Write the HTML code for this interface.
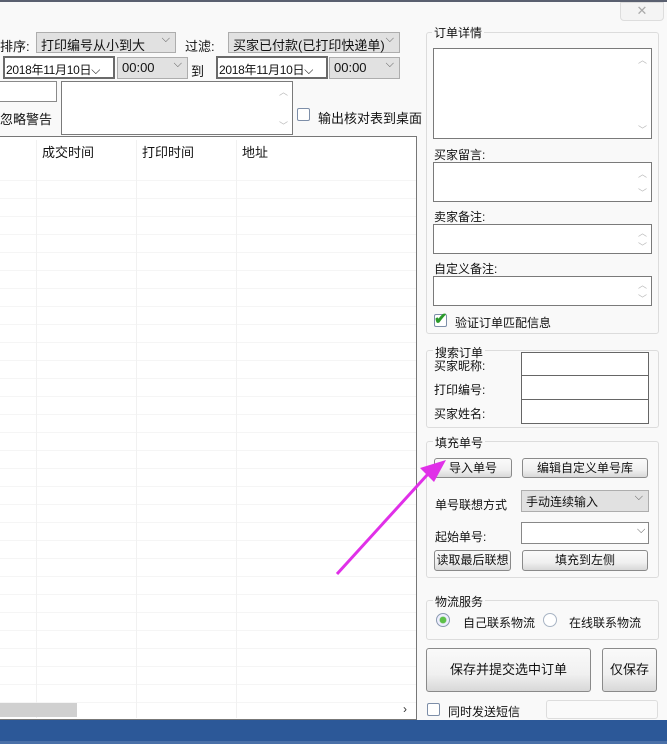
<!DOCTYPE html>
<html><head><meta charset="utf-8"><style>
*{box-sizing:border-box;margin:0;padding:0}
body{width:667px;height:744px;overflow:hidden;background:#f9f9f9;font:12px "Liberation Sans","Noto Sans CJK SC",sans-serif;color:#111;position:relative}
.a{position:absolute;white-space:nowrap}
.sel{position:absolute;background:#e1e1e1;border:1px solid #adadad;height:21px;padding:2px 0 0 4px;font-size:13px}
.sel:after{content:"⌵";position:absolute;right:5px;top:0px;font-size:11px;color:#555}
.dt{position:absolute;background:#fff;border:2px solid #6a6a6a;height:23px;padding:3px 0 0 1px;font-size:12px;letter-spacing:-0.3px;overflow:hidden}
.box{position:absolute;background:#fff;border:1px solid #7a7a7a}
.box .up,.box .dn{position:absolute;right:4px;font-size:9px;color:#bbb}
.grp{position:absolute;border:1px solid #dcdcdc;border-radius:3px}
.lg{position:absolute;background:#f9f9f9;padding:0 2px;font-size:12px}
.btn{position:absolute;border:1px solid #8a8a8a;border-radius:3px;background:linear-gradient(#fafafa,#f0f0f0 60%,#d8d8d8);text-align:center;font-size:12px}
.cb{position:absolute;width:13px;height:13px;border:1px solid #7d8ea8;background:#fff;border-radius:2px}
</style></head><body>
<div class="a" style="left:0;top:0;width:667px;height:2px;background:#5a6070"></div>
<div class="a" style="left:0;top:36px;font-size:13px">排序:</div>
<div class="sel" style="left:36px;top:32px;width:140px">打印编号从小到大</div>
<div class="a" style="left:185px;top:36px;font-size:13px">过滤:</div>
<div class="sel" style="left:228px;top:32px;width:172px">买家已付款(已打印快递单)</div>
<div class="dt" style="left:3px;top:56px;width:112px">2018年11月10日⌵</div>
<div class="sel" style="left:117px;top:57px;width:71px;height:22px">00:00</div>
<div class="a" style="left:191px;top:61px;font-size:13px">到</div>
<div class="dt" style="left:216px;top:56px;width:112px">2018年11月10日⌵</div>
<div class="sel" style="left:329px;top:57px;width:71px;height:22px">00:00</div>
<div class="a" style="left:-2px;top:81px;width:59px;height:21px;background:#fff;border:1px solid #8a8a8a"></div>
<div class="a" style="left:0;top:109px;font-size:13px">忽略警告</div>
<div class="box" style="left:61px;top:81px;width:232px;height:54px"><span class="up" style="top:3px">︿</span><span class="dn" style="bottom:2px">﹀</span></div>
<div class="cb" style="left:297px;top:108px"></div>
<div class="a" style="left:318px;top:108px;font-size:13px">输出核对表到桌面</div>
<div class="a" style="left:0;top:136px;width:417px;height:584px;background:#fff;border:1px solid #777;border-left:none;
background-image:repeating-linear-gradient(180deg,transparent 0 17px,#f5f5f5 17px 18px);background-position:0 26px;"></div>
<div class="a" style="left:0;top:137px;width:416px;height:26px;background:#fff"></div>
<div class="a" style="left:36px;top:140px;width:1px;height:578px;background:#f1f1f1"></div>
<div class="a" style="left:136px;top:140px;width:1px;height:578px;background:#f1f1f1"></div>
<div class="a" style="left:236px;top:140px;width:1px;height:578px;background:#f1f1f1"></div>
<div class="a" style="left:42px;top:142px;font-size:13px">成交时间</div>
<div class="a" style="left:142px;top:142px;font-size:13px">打印时间</div>
<div class="a" style="left:242px;top:142px;font-size:13px">地址</div>
<div class="a" style="left:0;top:703px;width:77px;height:14px;background:#d0d0d0"></div>
<div class="a" style="left:403px;top:702px;font-size:12px;color:#333">›</div>
<div class="a" style="left:620px;top:2px;width:44px;height:19px;border:1px solid #ddd;border-radius:0 0 4px 4px;background:#f4f4f4;color:#aaa;text-align:center;font-size:13px">✕</div>
<div class="grp" style="left:426px;top:32px;width:233px;height:302px"></div>
<div class="lg" style="left:432px;top:24px">订单详情</div>
<div class="box" style="left:433px;top:48px;width:219px;height:91px"><span class="up" style="top:4px">︿</span><span class="dn" style="bottom:2px">﹀</span></div>
<div class="a" style="left:434px;top:146px">买家留言:</div>
<div class="box" style="left:433px;top:162px;width:219px;height:40px"><span class="up" style="top:4px">︿</span><span class="dn" style="bottom:2px">﹀</span></div>
<div class="a" style="left:434px;top:208px">卖家备注:</div>
<div class="box" style="left:433px;top:224px;width:219px;height:30px"><span class="up" style="top:1px">︿</span><span class="dn" style="bottom:0">﹀</span></div>
<div class="a" style="left:434px;top:260px">自定义备注:</div>
<div class="box" style="left:433px;top:276px;width:219px;height:30px"><span class="up" style="top:1px">︿</span><span class="dn" style="bottom:0">﹀</span></div>
<div class="cb" style="left:434px;top:314px"></div>
<div class="a" style="left:434px;top:309px;color:#2a9a2a;font-size:16px;font-weight:bold">✔</div>
<div class="a" style="left:455px;top:314px">验证订单匹配信息</div>
<div class="grp" style="left:426px;top:350px;width:233px;height:78px"></div>
<div class="lg" style="left:433px;top:344px">搜索订单</div>
<div class="a" style="left:434px;top:357px">买家昵称:</div>
<div class="a" style="left:434px;top:381px">打印编号:</div>
<div class="a" style="left:434px;top:405px">买家姓名:</div>
<div class="a" style="left:521px;top:352px;width:128px;height:72px;background:#fff;border:1px solid #666"></div>
<div class="a" style="left:521px;top:375px;width:128px;height:1px;background:#666"></div>
<div class="a" style="left:521px;top:399px;width:128px;height:1px;background:#666"></div>
<div class="grp" style="left:426px;top:441px;width:233px;height:137px"></div>
<div class="lg" style="left:433px;top:434px">填充单号</div>
<div class="btn" style="left:434px;top:458px;width:78px;height:20px;line-height:18px">导入单号</div>
<div class="btn" style="left:522px;top:458px;width:126px;height:20px;line-height:18px">编辑自定义单号库</div>
<div class="a" style="left:435px;top:496px">单号联想方式</div>
<div class="sel" style="left:521px;top:490px;width:128px;height:22px;font-size:12px">手动连续输入</div>
<div class="a" style="left:435px;top:528px">起始单号:</div>
<div class="a" style="left:521px;top:522px;width:128px;height:22px;background:#fff;border:1px solid #888"></div>
<div class="a" style="left:637px;top:524px;font-size:11px;color:#555">⌵</div>
<div class="btn" style="left:434px;top:550px;width:77px;height:21px;line-height:19px">读取最后联想</div>
<div class="btn" style="left:522px;top:550px;width:126px;height:21px;line-height:19px">填充到左侧</div>
<div class="grp" style="left:426px;top:600px;width:233px;height:40px"></div>
<div class="lg" style="left:433px;top:593px">物流服务</div>
<div class="a" style="left:436px;top:613px;width:14px;height:14px;border-radius:50%;border:1px solid #8a9ab0;background:radial-gradient(#5dc04a 35%,#eef 45%)"></div>
<div class="a" style="left:463px;top:614px">自己联系物流</div>
<div class="a" style="left:543px;top:613px;width:14px;height:14px;border-radius:50%;border:1px solid #a8b4c4;background:#fff"></div>
<div class="a" style="left:569px;top:614px">在线联系物流</div>
<div class="btn" style="left:426px;top:648px;width:165px;height:44px;line-height:42px;font-size:13px">保存并提交选中订单</div>
<div class="btn" style="left:602px;top:648px;width:55px;height:44px;line-height:42px;font-size:13px">仅保存</div>
<div class="cb" style="left:427px;top:703px"></div>
<div class="a" style="left:448px;top:703px">同时发送短信</div>
<div class="a" style="left:546px;top:700px;width:112px;height:19px;border:1px solid #ddd;border-radius:3px;background:#fafafa"></div>
<div class="a" style="left:0;top:720px;width:667px;height:24px;background:#2c5898"></div>
<div class="a" style="left:0;top:741px;width:667px;height:3px;background:#4a70a8"></div>
<svg class="a" style="left:0;top:0" width="667" height="744">
<line x1="337" y1="574" x2="428" y2="474" stroke="#e030e8" stroke-width="3"/>
<polygon points="446,460 420,468 434,482" fill="#e030e8"/>
</svg>
</body></html>
